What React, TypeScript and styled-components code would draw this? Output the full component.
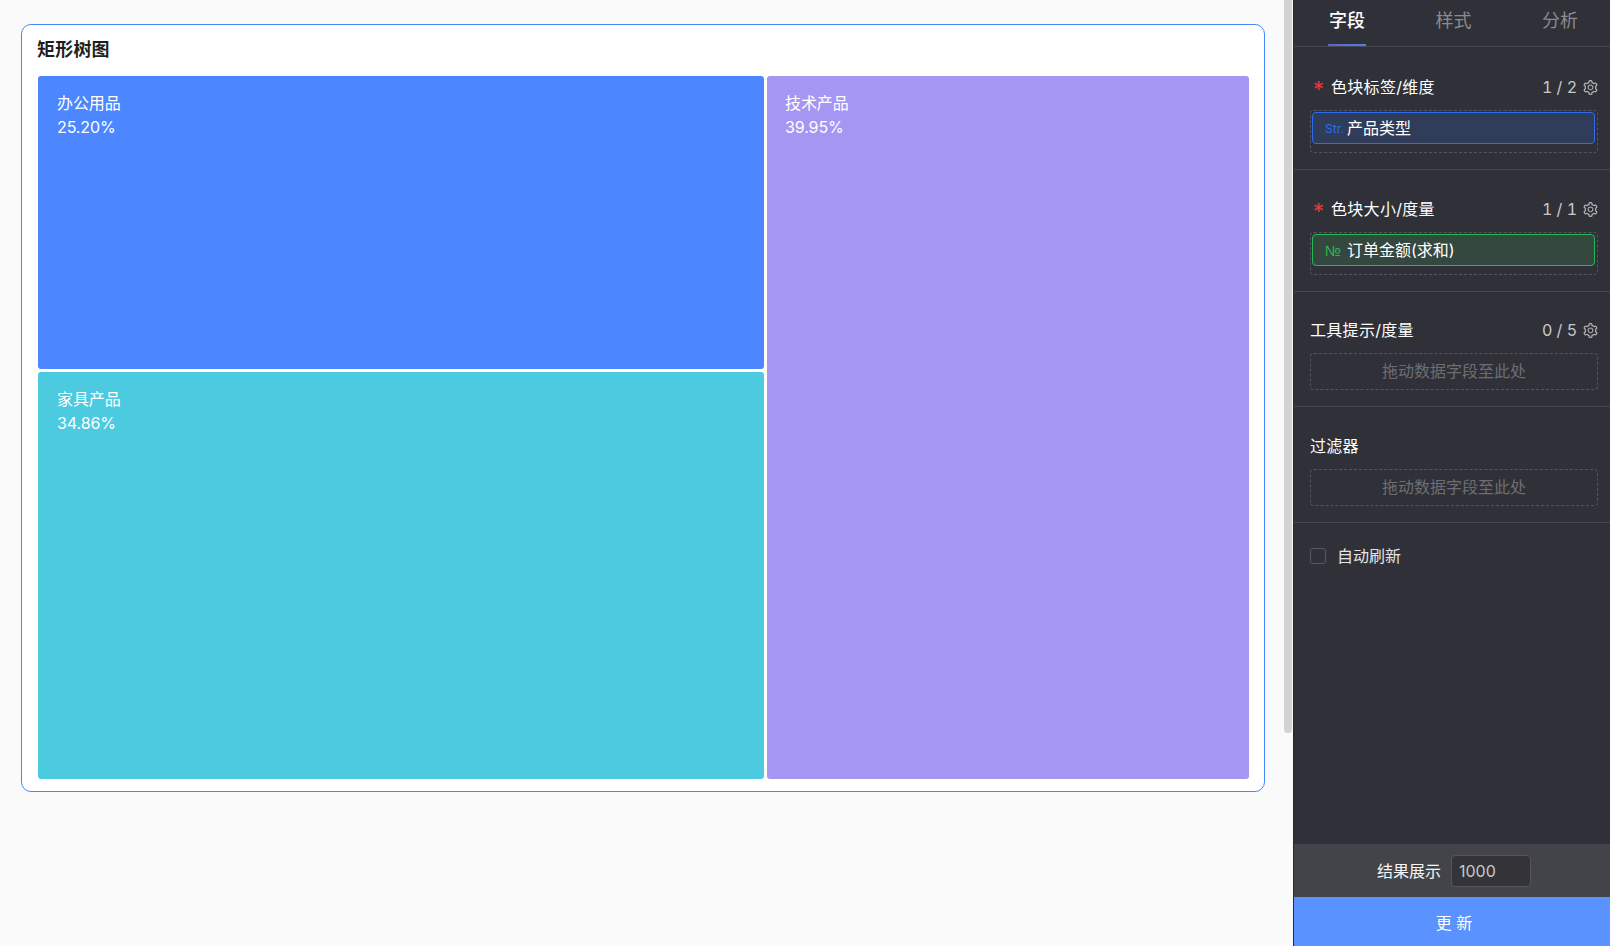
import styled, { createGlobalStyle } from "styled-components";
import { AiOutlineSetting } from "react-icons/ai";

const FONT = `Inter, "Noto Sans CJK SC", "Liberation Sans", sans-serif`;

const tree = [
  [
    { name: "办公用品", pct: "25.20%", color: "#4c87ff", size: 293 },
    { name: "家具产品", pct: "34.86%", color: "#4ccae0", size: 407 },
  ],
  [{ name: "技术产品", pct: "39.95%", color: "#a696f3", size: 703 }],
];

const Field = ({
  title,
  required,
  count,
  kind,
  chip,
  top = 27,
}: {
  title: string;
  required?: boolean;
  count: string;
  kind?: "str" | "num";
  chip?: string;
  top?: number;
}) => (
  <Section $top={top}>
    <SectionHead>
      {required && <Star>*</Star>}
      <SectionTitle>{title}</SectionTitle>
      <Count>{count}</Count>
      <Gear />
    </SectionHead>
    {chip && kind ? (
      <DropZone>
        <Chip $kind={kind}>
          <ChipType $kind={kind}>{kind === "str" ? "Str." : "№"}</ChipType>
          <ChipLabel>{chip}</ChipLabel>
        </Chip>
      </DropZone>
    ) : (
      <EmptyZone>拖动数据字段至此处</EmptyZone>
    )}
  </Section>
);

export default function App() {
  return (
    <>
      <Global />
      <Page>
        <Main>
          <Card>
            <CardTitle>矩形树图</CardTitle>
            <Treemap>
              {tree.map((column, i) => (
                <TreeColumn $width={i === 0 ? 726 : 482} key={i}>
                  {column.map((item) => (
                    <Block
                      $color={item.color}
                      $height={item.size}
                      $left={i === 0 ? 19 : 18}
                      key={item.name}
                    >
                      <div>{item.name}</div>
                      <div>{item.pct}</div>
                    </Block>
                  ))}
                </TreeColumn>
              ))}
            </Treemap>
          </Card>
          <ScrollThumb />
        </Main>
        <Panel>
          <Tabs>
            <Tab $active>字段</Tab>
            <Tab>样式</Tab>
            <Tab>分析</Tab>
          </Tabs>
          <Field title="色块标签/维度" required count="1 / 2" kind="str" chip="产品类型" top={28} />
          <Field title="色块大小/度量" required count="1 / 1" kind="num" chip="订单金额(求和)" />
          <Field title="工具提示/度量" count="0 / 5" top={26} />
          <Section $top={27}>
            <SectionHead>
              <SectionTitle>过滤器</SectionTitle>
            </SectionHead>
            <EmptyZone>拖动数据字段至此处</EmptyZone>
          </Section>
          <AutoRefresh>
            <Check type="checkbox" />
            自动刷新
          </AutoRefresh>
          <Footer>
            <FooterLabel>结果展示</FooterLabel>
            <LimitInput defaultValue="1000" />
          </Footer>
          <UpdateButton>更 新</UpdateButton>
        </Panel>
      </Page>
    </>
  );
}

const Global = createGlobalStyle`
  html, body {
    margin: 0;
    height: 100%;
    overflow: hidden;
    background: #fafafa;
    font-family: ${FONT};
  }
  * {
    box-sizing: border-box;
  }
`;

const Page = styled.div`
  display: flex;
  height: 946px;
`;

const Main = styled.div`
  position: relative;
  flex: 1;
  padding: 24px 28px 0 21px;
`;

const ScrollThumb = styled.div`
  position: absolute;
  top: 0;
  right: 1px;
  width: 8px;
  height: 733px;
  background: #d3d3d3;
  border-radius: 0 0 4px 4px;
`;

const Card = styled.div`
  display: flex;
  flex-direction: column;
  height: 768px;
  padding: 12px 15px 12px 16px;
  background: #fff;
  border: 1px solid #4389ff;
  border-radius: 10px;
`;

const CardTitle = styled.div`
  height: 25px;
  margin: 0 0 14px -1px;
  padding-top: 1px;
  font-size: 18px;
  font-weight: 600;
  line-height: 24px;
  letter-spacing: 0.2px;
  color: #1f1f1f;
`;

const Treemap = styled.div`
  display: flex;
  flex: 1;
  gap: 3px;
`;

const TreeColumn = styled.div<{ $width: number }>`
  display: flex;
  flex: 0 0 ${({ $width }) => $width}px;
  flex-direction: column;
  gap: 3px;
`;

const Block = styled.div<{ $color: string; $height: number; $left: number }>`
  flex: 0 0 ${({ $height }) => $height}px;
  padding: 15px ${({ $left }) => $left}px;
  font-size: 16px;
  line-height: 24px;
  letter-spacing: -0.1px;
  color: #fff;
  background: ${({ $color }) => $color};
  border-radius: 3px;
`;

const Panel = styled.aside`
  display: flex;
  flex-direction: column;
  width: 317px;
  color: #fff;
  background: #303138;
  border-left: 1px solid #28292d;
`;

const Tabs = styled.div`
  display: flex;
  justify-content: space-between;
  height: 47px;
  padding: 0 32px 0 35px;
  border-bottom: 1px solid #47484d;
`;

const Tab = styled.div<{ $active?: boolean }>`
  position: relative;
  font-size: 18px;
  font-weight: ${({ $active }) => ($active ? 500 : 400)};
  line-height: 41px;
  color: ${({ $active }) => ($active ? "#fff" : "#8b8c90")};

  &::after {
    content: "";
    display: ${({ $active }) => ($active ? "block" : "none")};
    position: absolute;
    left: -1px;
    right: -1px;
    bottom: 0;
    height: 2px;
    background: linear-gradient(90deg, #5f63c8, #4a82e6);
  }
`;

const Section = styled.section<{ $top: number }>`
  padding: ${({ $top }) => $top}px 12px 16px 16px;
  border-bottom: 1px solid #47484d;
`;

const SectionHead = styled.div`
  display: flex;
  align-items: center;
  height: 24px;
  margin-bottom: 11px;
`;

const Star = styled.span`
  width: 21px;
  padding: 4px 0 0 3px;
  font-size: 22px;
  line-height: 24px;
  color: #e5393b;
`;

const SectionTitle = styled.span`
  flex: 1;
  font-size: 16px;
  line-height: 24px;
  letter-spacing: 0.3px;
  color: #fff;
`;

const Count = styled.span`
  font-size: 16px;
  line-height: 24px;
  font-variant-numeric: tabular-nums;
  color: #c8c8cb;
`;

const Gear = styled(AiOutlineSetting)`
  width: 17px;
  height: 17px;
  margin: 0 -1px 0 5px;
  color: #b4b4b8;
`;

const DropZone = styled.div`
  padding: 1px 2px 8px 1px;
  border: 1px dashed #55565b;
  border-radius: 4px;
`;

const EmptyZone = styled.div`
  height: 37px;
  font-size: 16px;
  line-height: 35px;
  text-align: center;
  color: #6d6e73;
  border: 1px dashed #55565b;
  border-radius: 4px;
`;

const Chip = styled.div<{ $kind: "str" | "num" }>`
  display: flex;
  align-items: center;
  height: 32px;
  padding-left: 12px;
  font-size: 16px;
  color: #fff;
  background: ${({ $kind }) => ($kind === "str" ? "#2f3c5a" : "#35483f")};
  border: 1px solid ${({ $kind }) => ($kind === "str" ? "#2e6df0" : "#22b856")};
  border-radius: 4px;
`;

const ChipType = styled.span<{ $kind: "str" | "num" }>`
  width: 22px;
  font-family: ${({ $kind }) => ($kind === "str" ? "inherit" : `"Liberation Sans", sans-serif`)};
  font-size: ${({ $kind }) => ($kind === "str" ? 12 : 15)}px;
  color: ${({ $kind }) => ($kind === "str" ? "#2e6df0" : "#22b856")};
`;

const ChipLabel = styled.span`
  padding-bottom: 2px;
`;

const AutoRefresh = styled.label`
  display: flex;
  flex: 1;
  align-items: flex-start;
  padding: 21px 0 0 16px;
  font-size: 16px;
  line-height: 24px;
  color: #e4e4e6;
`;

const Check = styled.input`
  appearance: none;
  width: 16px;
  height: 16px;
  margin: 4px 11px 0 0;
  background: #303138;
  border: 1px solid #5a5b60;
  border-radius: 3px;
`;

const Footer = styled.div`
  display: flex;
  align-items: center;
  justify-content: center;
  gap: 10px;
  height: 53px;
  padding-left: 4px;
  background: #434449;
`;

const FooterLabel = styled.span`
  padding-bottom: 2px;
  font-size: 16px;
  color: #f6f6f6;
`;

const LimitInput = styled.input`
  width: 80px;
  height: 32px;
  padding: 0 7px;
  font-family: inherit;
  font-size: 16px;
  color: #c8c8c8;
  background: #333338;
  border: 1px solid #55565b;
  border-radius: 4px;
  outline: none;
`;

const UpdateButton = styled.button`
  height: 49px;
  padding: 0 0 0 4px;
  font-family: inherit;
  font-size: 16px;
  color: #fff;
  background: #5a92ff;
  border: none;
`;
